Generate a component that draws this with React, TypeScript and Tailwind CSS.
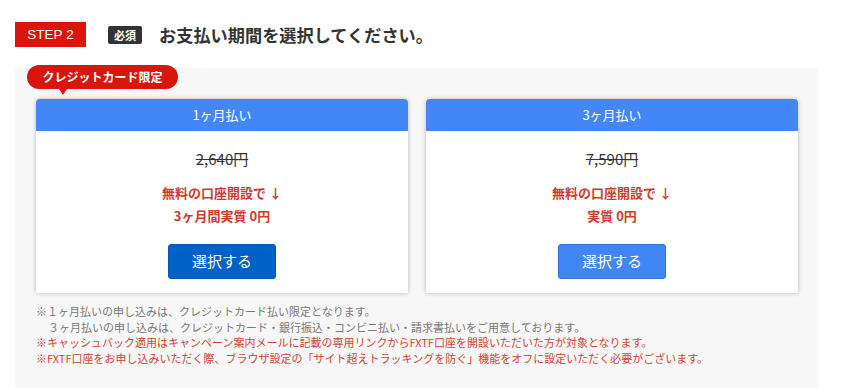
import React from "react";

const PLANS = [
  { title: "1ヶ月払い", price: "2,640円", note: "3ヶ月間実質 0円", btn: "bg-[#0062c9] border-[#0058b8]" },
  { title: "3ヶ月払い", price: "7,590円", note: "実質 0円", btn: "bg-[#4286f5] border-[#2f6fd6]" },
];

export default function App() {
  return (
    <div
      className="relative h-[388px] w-[846px] overflow-hidden bg-white"
      style={{ fontFamily: '"Noto Sans CJK JP", "Noto Sans", sans-serif' }}
    >
      <div className="flex items-center pl-[15px] pt-[22px]">
        <div className="flex h-[25px] w-[71px] items-center justify-center bg-[#d9160c] font-['Liberation_Sans',sans-serif] text-[13.5px] text-white">
          STEP 2
        </div>
        <div className="ml-[22px] flex h-[18px] w-[34px] items-center justify-center rounded-[2px] bg-[#333] text-[11px] font-bold text-white">
          必須
        </div>
        <h2 className="ml-[17px] text-[17.2px] font-bold text-[#333]">お支払い期間を選択してください。</h2>
      </div>

      <div className="relative ml-[15px] mt-[20px] h-[340px] w-[803px] bg-[#f7f7f7] pl-[21px] pt-[31px]">
        {/* badge over the first card */}
        <div className="absolute left-[12px] top-[-3px] z-10">
          <div className="flex h-[24px] w-[151px] items-center justify-center rounded-full bg-[#d9160c] text-[12px] font-bold text-white">
            クレジットカード限定
          </div>
          <div className="ml-[32px] h-0 w-0 border-x-[4px] border-t-[6px] border-x-transparent border-t-[#d9160c]" />
        </div>

        <div className="flex gap-[18px]">
          {PLANS.map((p) => (
            <div key={p.title} className="w-[372px] overflow-hidden rounded-t-[4px] bg-white shadow-[0_0_4px_rgba(0,0,0,0.28)]">
              <div className="flex h-[32px] items-center justify-center bg-[#4287f5] text-[13px] text-white">
                {p.title}
              </div>
              <div className="flex h-[162px] flex-col items-center pt-[18px]">
                <p className="text-[15px] leading-[20px] text-[#333] line-through">{p.price}</p>
                <p className="mt-[15px] text-[13px] font-bold leading-[18px] text-[#cf3a2c]">無料の口座開設で ↓</p>
                <p className="mt-[5px] text-[13px] font-bold leading-[18px] text-[#cf3a2c]">{p.note}</p>
                <button
                  className={`mt-[19px] flex h-[35px] w-[108px] items-center justify-center rounded-[3px] border text-[15px] text-white ${p.btn}`}
                >
                  選択する
                </button>
              </div>
            </div>
          ))}
        </div>

        <div className="mt-[11px] text-[11px] leading-[15.7px]">
          <p className="text-[#777]">※１ヶ月払いの申し込みは、クレジットカード払い限定となります。</p>
          <p className="pl-[12px] text-[#777]">３ヶ月払いの申し込みは、クレジットカード・銀行振込・コンビニ払い・請求書払いをご用意しております。</p>
          <p className="text-[#d9402f]">※キャッシュバック適用はキャンペーン案内メールに記載の専用リンクからFXTF口座を開設いただいた方が対象となります。</p>
          <p className="text-[#d9402f]">※FXTF口座をお申し込みいただく際、ブラウザ設定の「サイト超えトラッキングを防ぐ」機能をオフに設定いただく必要がございます。</p>
        </div>
      </div>
    </div>
  );
}
